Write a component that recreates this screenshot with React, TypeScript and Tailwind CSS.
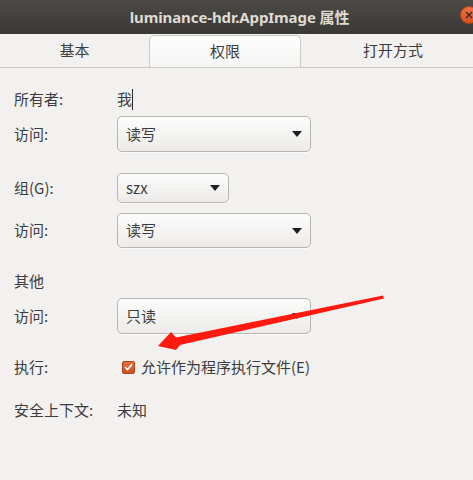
import React from "react";

function Caret() {
  return (
    <svg width="10" height="6" viewBox="0 0 10 6" className="shrink-0">
      <polygon points="0,0 10,0 5,6" fill="#1f1f1f" />
    </svg>
  );
}

function Combo({ text, width, height }: { text: string; width: string; height: string }) {
  return (
    <div
      className={`${width} ${height} flex items-center justify-between pl-[8px] pr-[8px] rounded-[5px] border border-[#b9b5af] bg-gradient-to-b from-[#fcfcfc] to-[#ecebe9] shadow-[0_1px_0_rgba(255,255,255,0.8)]`}
    >
      <span className="text-[15px] text-[#3c3c3c]">{text}</span>
      <Caret />
    </div>
  );
}

export default function App() {
  return (
    <div className="relative w-[473px] h-[480px] overflow-hidden bg-[#f2f1f0] font-['Noto_Sans_CJK_SC',sans-serif] text-[#3c3c3c]">
      {/* title bar */}
      <div className="relative h-[34px] bg-gradient-to-b from-[#4c4a45] to-[#3a3935] flex items-center justify-center">
        <span className="ml-[6px] text-[15px] font-bold text-[#dfdbd2] font-['Noto_Sans','Noto_Sans_CJK_SC',sans-serif] tracking-[-0.1px]">
          luminance-hdr.AppImage 属性
        </span>
        <div className="absolute left-[460px] top-[6px] w-[18px] h-[18px] rounded-full bg-gradient-to-b from-[#f0703f] to-[#d8501c] border border-[#b8431a] flex items-center justify-start pl-[4px]">
          <svg width="8" height="8" viewBox="0 0 8 8">
            <path d="M1 1 L7 7 M7 1 L1 7" stroke="#3a2a22" strokeWidth="1.4" />
          </svg>
        </div>
      </div>

      {/* tabs */}
      <div className="h-[34px] flex items-end border-b border-[#cdc8c3]">
        <div className="w-[149px] shrink-0 h-[32px] flex items-center justify-center text-[15px] pb-[1px]">基本</div>
        <div className="w-[152px] shrink-0 h-[32px] flex items-center justify-center text-[15px] pb-[1px] rounded-t-[5px] border border-b-0 border-[#cdc8c3] bg-gradient-to-b from-[#fdfdfd] to-[#f5f5f4]">
          权限
        </div>
        <div className="w-[184px] shrink-0 h-[32px] flex items-center justify-center text-[15px] pb-[1px]">打开方式</div>
      </div>

      {/* content */}
      <div className="flex flex-col pl-[14px] pt-[20px] text-[15px]">
        <div className="h-[22px] flex items-center">
          <span className="w-[103px]">所有者:</span>
          <span>我</span>
          <span className="w-[1px] h-[21px] bg-[#2a2a2a]" />
        </div>
        <div className="mt-[6px] h-[36px] flex items-center">
          <span className="w-[103px]">访问:</span>
          <Combo text="读写" width="w-[194px]" height="h-[36px]" />
        </div>
        <div className="mt-[21px] h-[30px] flex items-center">
          <span className="w-[103px]">组(G):</span>
          <Combo text="szx" width="w-[112px]" height="h-[30px]" />
        </div>
        <div className="mt-[10px] h-[35px] flex items-center">
          <span className="w-[103px]">访问:</span>
          <Combo text="读写" width="w-[194px]" height="h-[35px]" />
        </div>
        <div className="mt-[23px] h-[20px] flex items-center">
          <span>其他</span>
        </div>
        <div className="mt-[7px] h-[36px] flex items-center">
          <span className="w-[103px]">访问:</span>
          <Combo text="只读" width="w-[194px]" height="h-[36px]" />
        </div>
        <div className="mt-[23px] h-[20px] flex items-center">
          <span className="w-[108px]">执行:</span>
          <span className="w-[13px] h-[13px] rounded-[2px] bg-gradient-to-b from-[#e0703d] to-[#c9521f] border border-[#a8451c] flex items-center justify-center">
            <svg width="9" height="8" viewBox="0 0 9 8">
              <path d="M1 4 L3.5 6.5 L8 1.2" stroke="#ffffff" strokeWidth="1.6" fill="none" />
            </svg>
          </span>
          <span className="ml-[6px]">允许作为程序执行文件(E)</span>
        </div>
        <div className="mt-[23px] h-[20px] flex items-center">
          <span className="w-[103px]">安全上下文:</span>
          <span>未知</span>
        </div>
      </div>

      {/* red annotation arrow */}
      <svg className="absolute inset-0 pointer-events-none" width="473" height="480" viewBox="0 0 473 480">
        <polygon
          points="383,295.5 176,337.5 171,332 158,346 176,350 180,345 384,298.5"
          fill="#ff1a0f"
        />
      </svg>
    </div>
  );
}
